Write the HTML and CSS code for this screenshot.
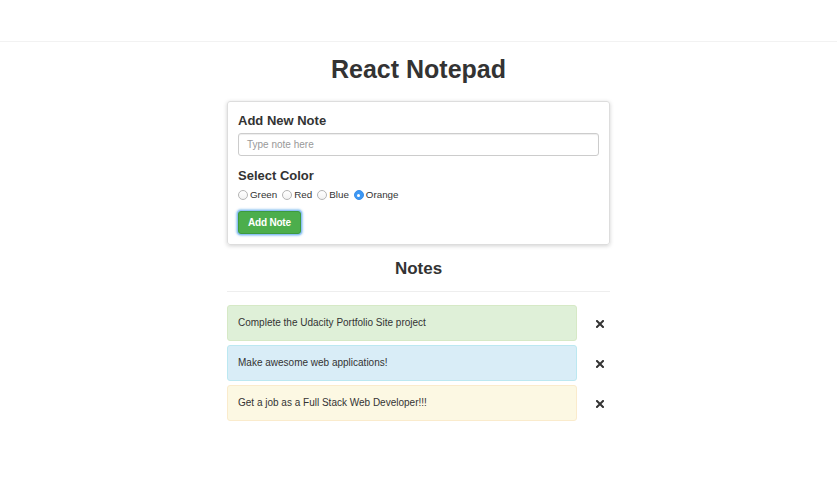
FILE: index.html
```html
<!DOCTYPE html>
<html>
<head>
<meta charset="utf-8">
<link rel="stylesheet" href="styles.css">
</head>
<body>
<div class="topbar"></div>
<div class="page">
  <h1 class="title">React Notepad</h1>
  <div class="panel">
    <h3 class="label">Add New Note</h3>
    <div class="input">Type note here</div>
    <h3 class="label label-color">Select Color</h3>
    <div class="radios">
      <span class="radio"><span class="dot"></span>Green</span>
      <span class="radio"><span class="dot"></span>Red</span>
      <span class="radio"><span class="dot"></span>Blue</span>
      <span class="radio"><span class="dot on"></span>Orange</span>
    </div>
    <button class="btn">Add Note</button>
  </div>
  <h2 class="notes-title">Notes</h2>
  <div class="rule"></div>
  <div class="notes">
    <div class="note green">Complete the Udacity Portfolio Site project</div>
    <div class="close"><svg width="8" height="8" viewBox="0 0 8 8"><path d="M1 1L7 7M7 1L1 7" stroke="#333" stroke-width="2" stroke-linecap="square"/></svg></div>
    <div class="note blue">Make awesome web applications!</div>
    <div class="close"><svg width="8" height="8" viewBox="0 0 8 8"><path d="M1 1L7 7M7 1L1 7" stroke="#333" stroke-width="2" stroke-linecap="square"/></svg></div>
    <div class="note yellow">Get a job as a Full Stack Web Developer!!!</div>
    <div class="close"><svg width="8" height="8" viewBox="0 0 8 8"><path d="M1 1L7 7M7 1L1 7" stroke="#333" stroke-width="2" stroke-linecap="square"/></svg></div>
  </div>
</div>
</body>
</html>
```
FILE: styles.css
```css
* { box-sizing: border-box; }
html, body { margin: 0; padding: 0; background: #fff; }
body {
  font-family: "Liberation Sans", Arial, sans-serif;
  color: #333;
  padding-right: 3px;
}
.topbar {
  height: 42px;
  border-bottom: 1px solid #f2f2f2;
}
.page {
  width: 383px;
  margin: 0 auto;
}
.title {
  margin: 12px 0 0;
  font-size: 25px;
  line-height: 30px;
  font-weight: bold;
  text-align: center;
  color: #333;
}
.panel {
  margin-top: 17px;
  border: 1px solid #ddd;
  border-radius: 3px;
  box-shadow: 0 1px 4px rgba(0,0,0,0.18);
  padding: 11px 10px 10px;
  height: 144px;
}
.label {
  margin: 0;
  font-size: 13px;
  line-height: 16px;
  font-weight: bold;
  color: #333;
}
.input {
  margin-top: 4px;
  height: 23px;
  border: 1px solid #ccc;
  border-radius: 3px;
  box-shadow: inset 0 1px 1px rgba(0,0,0,0.075);
  font-size: 10px;
  line-height: 21px;
  padding-left: 8px;
  color: #999;
}
.label-color { margin-top: 12px; }
.radios {
  margin-top: 4px;
  display: flex;
  font-size: 9.8px;
  line-height: 14px;
  color: #333;
}
.radio {
  display: inline-flex;
  align-items: center;
  margin-right: 5px;
}
.dot {
  width: 10px;
  height: 10px;
  border-radius: 50%;
  border: 1px solid #b5b5b5;
  background: linear-gradient(#fff, #f2f2f2);
  margin-right: 2px;
  position: relative;
}
.dot.on {
  border-color: #3c8ee8;
  background: #3c98f5;
}
.dot.on::after {
  content: "";
  position: absolute;
  left: 2.5px;
  top: 2.5px;
  width: 3px;
  height: 3px;
  border-radius: 50%;
  background: #fff;
}
.btn {
  display: block;
  margin-top: 9px;
  height: 23px;
  padding: 0 9px;
  font-family: inherit;
  font-size: 10px;
  font-weight: bold;
  letter-spacing: -0.2px;
  color: #fff;
  background: #4cae4c;
  border: 1px solid #3e9a3e;
  border-radius: 3px;
  box-shadow: 0 0 0 1px #8ec0f5, 0 0 2px 2px rgba(102,175,233,0.6);
}
.notes-title {
  margin: 14px 0 0;
  font-size: 17px;
  line-height: 20px;
  font-weight: bold;
  text-align: center;
  color: #333;
}
.rule {
  margin-top: 12px;
  border-top: 1px solid #eee;
}
.notes {
  margin-top: 13px;
  display: grid;
  grid-template-columns: 350px 33px;
  row-gap: 4px;
  align-items: center;
}
.note {
  height: 36px;
  border: 1px solid;
  border-radius: 3px;
  padding-left: 10px;
  font-size: 10px;
  line-height: 34px;
  color: #333;
}
.green { background: #dff0d8; border-color: #d6e9c6; }
.blue { background: #d9edf7; border-color: #bce8f1; }
.yellow { background: #fcf8e3; border-color: #faebcc; }
.close {
  display: flex;
  justify-content: flex-end;
  padding-right: 6px;
  padding-top: 2px;
}
.close svg { display: block; }
```
